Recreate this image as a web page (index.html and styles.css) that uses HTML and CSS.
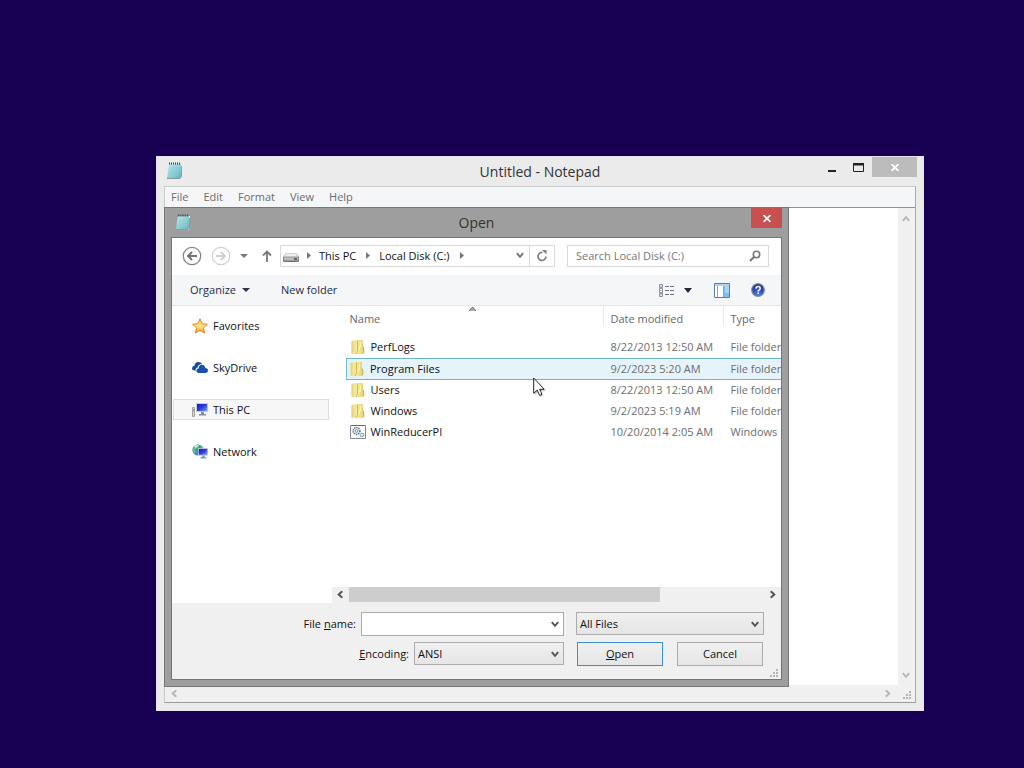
FILE: index.html
```html
<!DOCTYPE html>
<html lang="en">
<head>
<meta charset="utf-8">
<title>Untitled - Notepad</title>
<link rel="stylesheet" href="styles.css">
</head>
<body>
<svg width="0" height="0" class="defs" aria-hidden="true">
  <defs>
    <linearGradient id="gFolder" x1="0" x2="1"><stop offset="0" stop-color="#f8efa6"/><stop offset="1" stop-color="#e6cf62"/></linearGradient>
    <linearGradient id="gPad" x1="0" y1="0" x2="1" y2="1"><stop offset="0" stop-color="#c4eaee"/><stop offset="1" stop-color="#5fb4bd"/></linearGradient>
    <linearGradient id="gScreen" x1="0" x2="1" y2="1"><stop offset="0" stop-color="#1a22a8"/><stop offset=".5" stop-color="#2a3be0"/><stop offset="1" stop-color="#7aa2f4"/></linearGradient>
    <linearGradient id="gStar" x1="0" y1="0" x2="0" y2="1"><stop offset="0" stop-color="#ffc23c"/><stop offset=".5" stop-color="#ffe680"/><stop offset="1" stop-color="#f59a2c"/></linearGradient>
    <radialGradient id="gHelp" cx=".5" cy=".8" r=".7"><stop offset="0" stop-color="#4c7bea"/><stop offset="1" stop-color="#1c2c90"/></radialGradient>
    <linearGradient id="gDisk" x1="0" y1="0" x2="0" y2="1"><stop offset="0" stop-color="#b5b5b5"/><stop offset="1" stop-color="#6d6d6d"/></linearGradient>
    <symbol id="pad" viewBox="0 0 16 17">
      <path d="M4 2h12l-1 15H2z" fill="#fff"/>
      <path d="M3 2h12v13l-1 1.500H1z" fill="url(#gPad)"/>
      <path d="M1 16.500h13l1.500-2V4" fill="none" stroke="#74888b" stroke-width=".8"/>
      <path d="M4 6h9M3.700 8.500h9M3.400 11h9M3 13.500h9" stroke="#8fcfd6" stroke-width=".7"/>
      <path d="M3 1.500h12" stroke="#35494c" stroke-width="2" stroke-dasharray="1 1"/>
    </symbol>
    <symbol id="folder" viewBox="0 0 16 16">
      <path d="M1.500 2 4 1.500 8 1v14l-6.500-.500z" fill="#f3e795"/>
      <path d="M1.500 2 3.500 1.600v13.100l-2-.200z" fill="#e6d582"/>
      <path d="M7 1h5q1 0 1 1v5l1 2v4.500q0 1.500-1.500 1.500H6.500z" fill="url(#gFolder)"/>
      <path d="M7.500 1.500v10l-1.500 3.500" fill="none" stroke="#c9ab45" stroke-width=".8"/>
      <path d="M10.500 3v4.500l-1.500 3" fill="none" stroke="#fbf5c0" stroke-width="1.200"/>
      <path d="M12.800 7.500 13.800 9v5" fill="none" stroke="#b8a55e" stroke-width=".8"/>
    </symbol>
    <symbol id="chev" viewBox="0 0 8 7"><path d="M.8 1.200 4 4.800l3.200-3.600" fill="none" stroke="currentColor" stroke-width="2"/></symbol>
    <symbol id="grip" viewBox="0 0 9 9"><path d="M6 0h2v2H6zM3 3h2v2H3zM6 3h2v2H6zM0 6h2v2H0zM3 6h2v2H3zM6 6h2v2H6z" fill="#b5b5b5"/></symbol>
    <symbol id="monitor" viewBox="0 0 12 13">
      <path d="M0 0h12v9H0z" fill="#c3cbe0"/><path d="M1 1h10v7H1z" fill="url(#gScreen)"/>
      <path d="M5 9h3v2H5zM3 11h7v1.500H3z" fill="#7d92a8"/>
    </symbol>
  </defs>
</svg>

<main class="desktop">
<section class="notepad" aria-label="Notepad">
  <header class="titlebar">
    <svg class="pad-icon" width="16" height="17"><use href="#pad"/></svg>
    <h1>Untitled - Notepad</h1>
    <div class="controls">
      <button class="min" aria-label="Minimize"><svg width="8" height="10"><path d="M0 8h8v2H0z" fill="#222"/></svg></button>
      <button class="max" aria-label="Maximize"><svg width="11" height="9"><path d="M.5 2v6.500h10V2" fill="none" stroke="#222"/><path d="M0 0h11v2.500H0z" fill="#222"/></svg></button>
      <button class="close" aria-label="Close"><svg width="8" height="7"><path d="M.5 0 7.500 7M7.500 0 .5 7" stroke="#fff" stroke-width="1.800"/></svg></button>
    </div>
  </header>
  <div class="client">
    <nav class="menu">
      <button>File</button><button>Edit</button><button>Format</button><button>View</button><button>Help</button>
    </nav>
    <div class="editor">
      <textarea aria-label="Document text"></textarea>
      <div class="vscroll">
        <svg class="up" width="8" height="7"><use href="#chev"/></svg>
        <svg width="8" height="7"><use href="#chev"/></svg>
      </div>
    </div>
    <div class="hscroll">
      <svg class="left" width="8" height="7"><use href="#chev"/></svg>
      <svg class="right" width="8" height="7"><use href="#chev"/></svg>
      <svg class="grip" width="9" height="9"><use href="#grip"/></svg>
    </div>
  </div>

  <section class="dialog" role="dialog" aria-label="Open">
    <header class="dialog-title">
      <svg class="pad-icon" width="15" height="16"><use href="#pad"/></svg>
      <h2>Open</h2>
      <button class="dialog-close" aria-label="Close"><svg width="8" height="7"><path d="M.5 0 7.500 7M7.500 0 .5 7" stroke="#fff" stroke-width="1.800"/></svg></button>
    </header>
    <div class="dialog-body">
      <div class="navbar">
        <button class="round" aria-label="Back"><svg width="20" height="20"><circle cx="10" cy="10" r="8.700" fill="none" stroke="#858585" stroke-width="1.300"/><path d="M15 10H7M10 6l-4 4 4 4" fill="none" stroke="#757575" stroke-width="2"/></svg></button>
        <button class="round" aria-label="Forward"><svg width="20" height="20"><circle cx="10" cy="10" r="8.700" fill="none" stroke="#cfcfcf" stroke-width="1.200"/><path d="M5 10h8M10 6l4 4-4 4" fill="none" stroke="#cfcfcf" stroke-width="1.800"/></svg></button>
        <button class="recent" aria-label="Recent locations"><svg width="8" height="4"><path d="M0 0h8L4 4z" fill="#777"/></svg></button>
        <button class="parent" aria-label="Up one level"><svg width="10" height="12"><path d="M5 12V2M1 5.500 5 1.500l4 4" fill="none" stroke="#777" stroke-width="1.800"/></svg></button>
        <div class="address">
          <svg width="16" height="9"><path d="M3 0h10l3 3.500v4q0 1.500-1.500 1.500h-13Q0 9 0 7.500v-4z" fill="url(#gDisk)"/><path d="M3.300.5h9.400l2.500 3H.8z" fill="#ededed"/><path d="M1 4.500h14v3H1z" fill="#bdbdbd"/><path d="M11 5h3v2h-3z" fill="#5e6b5e"/></svg>
          <svg class="arrow" width="4" height="7"><path d="M0 0v7l4-3.500z" fill="#777"/></svg>
          <button>This PC</button>
          <svg class="arrow" width="4" height="7"><path d="M0 0v7l4-3.500z" fill="#777"/></svg>
          <button>Local Disk (C:)</button>
          <svg class="arrow" width="4" height="7"><path d="M0 0v7l4-3.500z" fill="#777"/></svg>
          <button class="history" aria-label="Previous locations"><svg width="8" height="7"><use href="#chev"/></svg></button>
          <button class="refresh" aria-label="Refresh"><svg width="12" height="12"><path d="M6.500 2.500A4 4 0 1 0 10 6.500" fill="none" stroke="#808080" stroke-width="1.700"/><path d="M6 0h4.500v4.500z" fill="#808080"/></svg></button>
        </div>
        <div class="search">
          <input type="search" placeholder="Search Local Disk (C:)" aria-label="Search Local Disk (C:)">
          <svg width="12" height="12"><circle cx="7.500" cy="4.500" r="3.200" fill="none" stroke="#777" stroke-width="1.600"/><path d="M5 7 1 11" stroke="#777" stroke-width="2.200"/></svg>
        </div>
      </div>

      <div class="toolbar">
        <button class="organize">Organize <svg width="8" height="4"><path d="M0 0h8L4 4z" fill="#2c3648"/></svg></button>
        <button>New folder</button>
        <div class="tools">
          <button aria-label="Change view"><svg width="15" height="13"><path d="M.5.5h3v3h-3zM.5 4.500h3v4h-3zM.5 9.500h3v3h-3z" fill="#fff" stroke="#8b919b"/><path d="M1.500 2h1M1.500 6.500h1M1.500 11h1M6 2.500h4M11 2.500h4M6 6.500h4M11 6.500h4M6 10.500h4M11 10.500h4" stroke="#6d7380"/></svg></button>
          <button class="view-more" aria-label="More options"><svg width="8" height="5"><path d="M0 0h8L4 5z" fill="#1f2838"/></svg></button>
          <button class="preview" aria-label="Preview pane"><svg width="16" height="15"><path d="M.5.5h15v14H.5z" fill="#fff" stroke="#5580ad"/><path d="M1 1h14v2H1z" fill="#b9d2ea"/><path d="M10 3h5v11h-5z" fill="#82bbf0"/><path d="M11 3h4v7h-4z" fill="#a9d2f8"/><path d="M3.500 3v11M9.500 3v11" stroke="#8ba5c1"/></svg></button>
          <button aria-label="Help"><svg width="14" height="14"><circle cx="7" cy="7" r="6.300" fill="url(#gHelp)" stroke="#7d8cae" stroke-width="1.200"/><path d="M4.900 5.600Q5 3.500 7.200 3.500q2 0 2 1.800 0 1.100-1.100 1.700-.9.500-.9 1.500M7.200 9.500v1.600" fill="none" stroke="#fff" stroke-width="1.500"/></svg></button>
        </div>
      </div>

      <div class="panes">
        <nav class="sidebar">
          <a href="#favorites"><svg width="16" height="16"><path d="m8 .8 2.200 4.900 5.200.6-3.900 3.500 1.100 5.200L8 12.400 3.400 15l1.100-5.200L.6 6.300l5.200-.6z" fill="url(#gStar)" stroke="#df8432"/></svg>Favorites</a>
          <a href="#skydrive"><svg width="16" height="16"><path d="M3 10.500Q0 10.500 0 8.300 0 6 2.300 6 2.800 2 6.500 2 9 2 10.200 4 6 4 5.700 7.500 3.300 7.500 3.700 10.500z" fill="#174c9c"/><path d="M6.500 13Q4.300 12.800 4.300 10.800 4.500 8.700 6.600 8.600 6.800 4.900 10 4.800q2.600 0 3.300 3.200Q16 8.100 16 10.500T13.600 13z" fill="#1554ad"/></svg>SkyDrive</a>
          <a href="#this-pc" class="current"><svg width="16" height="16"><use href="#monitor" x="4" y="1" width="12" height="13"/><path d="M.5 5.500h2v9h-2z" fill="#cfd5c4" stroke="#a4a89b"/><path d="M1 7h1v2H1z" fill="#8ca37b"/></svg>This PC</a>
          <a href="#network"><svg width="16" height="16"><circle cx="6" cy="6" r="5.600" fill="#3a91c9"/><path d="M1 4Q3 0 7 .6 6 2 7 3L5 5 3 5.500 4 8 2.500 9.500Q0 7 1 4zM8 1l3 3-2 1.500z" fill="#68bd78"/><path d="M2 2.500Q5 0 7 1L4 4z" fill="#d3f0e3"/><use href="#monitor" x="6" y="4" width="10" height="11"/></svg>Network</a>
        </nav>
        <div class="files">
          <div class="table-clip">
            <svg class="sort" width="7" height="4"><path d="M0 4h7L3.500 0z" fill="#aaa"/><path d="M0 4 3.500 0 7 4" fill="none" stroke="#666"/></svg>
            <table>
              <colgroup><col class="c-name"><col class="c-date"><col class="c-type"></colgroup>
              <thead><tr><th>Name</th><th>Date modified</th><th>Type</th></tr></thead>
              <tbody>
                <tr><td><span><svg width="16" height="16"><use href="#folder"/></svg>PerfLogs</span></td><td>8/22/2013 12:50 AM</td><td>File folder</td></tr>
                <tr class="hover"><td><span><svg width="16" height="16"><use href="#folder"/></svg>Program Files</span></td><td>9/2/2023 5:20 AM</td><td>File folder</td></tr>
                <tr><td><span><svg width="16" height="16"><use href="#folder"/></svg>Users</span></td><td>8/22/2013 12:50 AM</td><td>File folder</td></tr>
                <tr><td><span><svg width="16" height="16"><use href="#folder"/></svg>Windows</span></td><td>9/2/2023 5:19 AM</td><td>File folder</td></tr>
                <tr><td><span><svg width="16" height="16"><path d="M.5 1.500h15v13H.5z" fill="#fff" stroke="#7d8898"/><path d="M1 1.500h14" stroke="#5f6f86"/><circle cx="6.500" cy="7" r="3.400" fill="#e4edf5" stroke="#5c7389" stroke-width="1.500" stroke-dasharray="1.300 .9"/><circle cx="6.500" cy="7" r="1.300" fill="#fff" stroke="#5c7389" stroke-width=".7"/><circle cx="12" cy="11" r="1.800" fill="#e4edf5" stroke="#5c7389" stroke-width="1.100" stroke-dasharray="1 .6"/></svg>WinReducerPI</span></td><td>10/20/2014 2:05 AM</td><td>Windows</td></tr>
              </tbody>
            </table>
          </div>
          <div class="files-scroll">
            <svg class="left" width="8" height="7"><use href="#chev"/></svg>
            <div class="track"><div class="thumb"></div></div>
            <svg class="right" width="8" height="7"><use href="#chev"/></svg>
          </div>
        </div>
      </div>

      <form class="footer">
        <label for="fname">File <u>n</u>ame:</label>
        <div class="field"><input id="fname" type="text"><svg width="8" height="7"><use href="#chev"/></svg></div>
        <div class="field type"><select aria-label="File type"><option>All Files</option></select><svg width="8" height="7"><use href="#chev"/></svg></div>
        <div class="encoding">
          <label for="enc"><u>E</u>ncoding:</label>
          <div class="field"><select id="enc"><option>ANSI</option></select><svg width="8" height="7"><use href="#chev"/></svg></div>
        </div>
        <div class="actions">
          <button type="button" class="default"><span><u>O</u>pen</span></button>
          <button type="button">Cancel</button>
        </div>
        <svg class="grip" width="9" height="9"><use href="#grip"/></svg>
      </form>
    </div>
  </section>
</section>
<svg class="cursor" width="13" height="20"><path d="M1.500 2.500v16l3.500-3.300 2.500 5L10 19l-2.300-4.700h4.600z" fill="#000" opacity=".2"/><path d="M.7 1v15.300l3.500-3.200 2.400 5.300 2.400-1.100-2.300-5h4.600z" fill="#fff" stroke="#222"/></svg>
</main>
</body>
</html>
```
FILE: styles.css
```css
* { box-sizing: border-box; }
body {
  margin: 0;
  font: 11px/16px "Open Sans", "Noto Sans", sans-serif;
  color: #111;
}
button, input, select, textarea { font: inherit; color: inherit; margin: 0; }
button { border: 0; background: none; padding: 0; }
svg { display: block; flex: none; }
h1, h2 { margin: 0; font-weight: 400; font-size: 14px; line-height: 20px; color: #333; text-align: center; }
.defs { position: absolute; }
.left { transform: rotate(90deg); }
.right { transform: rotate(-90deg); }
.up { transform: rotate(180deg); }

.desktop { position: relative; height: 100vh; background: #180052; overflow: hidden; }
.notepad {
  position: absolute; left: 156px; top: 156px; right: 100px; bottom: 57px;
  display: flex; flex-direction: column;
  padding: 0 7px 7px; background: #ebebeb; border: 1px solid #e9e3ee;
}
.titlebar { display: grid; grid-template-columns: 1fr auto 1fr; height: 29px; flex: none; }
.titlebar .pad-icon { margin: 5px 2px; }
.titlebar h1 { padding-top: 5px; }
.controls { display: flex; justify-content: flex-end; align-items: flex-start; margin-right: -1px; }
.controls button { display: grid; place-items: center; height: 20px; width: 27px; }
.controls .min { padding-bottom: 1px; }
.controls .close { width: 45px; background: #bcbcbc; }

.client { flex: 1; display: flex; flex-direction: column; border: 1px solid #c9cccc; border-bottom-color: #9a9a9a; border-right-color: #a9a9a9; min-height: 0; }
.menu { display: flex; gap: 15px; height: 20px; padding-left: 6px; background: #f5f6f7; color: #6d6d6d; flex: none; }
.editor { flex: 1; display: flex; border-top: 1px solid #8e9494; min-height: 0; }
.editor textarea { flex: 1; border: 0; resize: none; background: #fff; outline: 0; }
.vscroll { width: 17px; background: #f0f0f0; display: flex; flex-direction: column; align-items: center; justify-content: space-between; padding: 7px 2px 6px 0; color: #b8b8b8; }
.hscroll { height: 17px; background: #f0f0f0; display: flex; align-items: center; padding: 0 3px 1px 5px; color: #b8b8b8; flex: none; }
.hscroll .right { margin-left: auto; margin-right: 11px; }
.hscroll .grip { align-self: flex-end; margin-bottom: 1px; }

.dialog {
  position: absolute; left: 7px; top: 50px; right: 134px; bottom: 23px;
  display: flex; flex-direction: column;
  padding: 0 6px 6px; background: #9e9e9e; border: 1px solid #777;
}
.dialog-title { display: grid; grid-template-columns: 1fr auto 1fr; height: 29px; flex: none; }
.dialog-title .pad-icon { margin: 6px 4px; }
.dialog-title h2 { padding-top: 5px; }
.dialog-close { justify-self: end; width: 31px; height: 20px; background: #c75050; display: grid; place-items: center; }

.dialog-body { flex: 1; display: flex; flex-direction: column; min-height: 0; background: #fff; border: 1px solid #757575; }
.navbar { display: flex; align-items: center; height: 37px; padding: 0 12px 2px 10px; flex: none; }
.round + .round { margin-left: 9px; }
.recent { margin-left: 9px; }
.parent { margin: 0 8px 0 14px; }
.address, .search { display: flex; align-items: center; height: 22px; border: 1px solid #d9d9d9; }
.address { flex: 1; padding-left: 2px; }
.address > svg:first-child { margin-top: 4px; }
.address .arrow { margin: 0 8px; }
.address button + .arrow { margin: 0 9px 0 10px; }
.address .history { margin-left: auto; color: #777; padding: 0 5px; }
.refresh { border-left: 1px solid #d9d9d9; width: 25px; height: 20px; display: grid; place-items: center; }
.search { width: 202px; margin-left: 12px; padding: 0 7px 0 8px; }
.search input { flex: 1; min-width: 0; border: 0; padding: 0; outline: 0; background: none; }
.search input::placeholder { color: #757575; }

.toolbar { display: flex; align-items: center; gap: 31px; height: 31px; padding: 0 16px 0 18px; background: #f5f6f7; border-bottom: 1px solid #e3e5e8; color: #1e2b47; flex: none; }
.organize { display: flex; align-items: center; gap: 6px; }
.tools { margin-left: auto; display: flex; align-items: center; }
.view-more { margin: 0 22px 0 10px; }
.preview { margin-right: 21px; }

.panes { flex: 1; display: flex; min-height: 0; }
.sidebar { width: 160px; padding: 9px 3px 0 1px; display: flex; flex-direction: column; gap: 21px; flex: none; }
.sidebar a { display: flex; align-items: center; gap: 5px; height: 21px; padding-left: 18px; border: 1px solid transparent; color: #111; text-decoration: none; }
.sidebar .current { background: #f7f7f7; border-color: #dedede; }
.files { flex: 1; min-width: 0; display: flex; flex-direction: column; }
.table-clip { position: relative; flex: 1; min-height: 0; overflow: hidden; padding-left: 14px; }
.sort { position: absolute; left: 137px; top: 1px; }
table { border-collapse: collapse; table-layout: fixed; width: 520px; color: #6d6d6d; }
.c-name { width: 257px; }
.c-date { width: 120px; }
th { text-align: left; font-weight: 400; height: 31px; padding: 0 0 5px 7px; background: linear-gradient(#e8e8e8, #e8e8e8) right top / 1px 20px no-repeat; color: #666; }
th:first-child { padding-left: 3px; }
td { height: 21px; padding: 0 0 0 7px; white-space: nowrap; }
td:first-child { padding-left: 3px; color: #111; }
td span { display: flex; align-items: center; gap: 5px; }
.hover td { background: #e5f3fb; border-top: 1px solid #70b4cc; border-bottom: 1px solid #70b4cc; }
.hover td:first-child { border-left: 1px solid #70c0e7; padding-left: 2px; }
.files-scroll { height: 16px; background: #f0f0f0; display: flex; align-items: flex-start; padding: 0 4px; color: #555; flex: none; }
.files-scroll svg { margin-top: 4px; }
.track { flex: 1; height: 15px; margin: 0 5px; }
.thumb { width: 75%; height: 100%; background: #cdcdcd; }

.footer {
  position: relative; flex: none; background: #f0f0f0;
  display: grid; grid-template-columns: 1fr 203px 195px; column-gap: 5px; row-gap: 6px;
  align-items: start; padding: 9px 17px 13px;
}
.footer label { justify-self: end; line-height: 24px; }
.footer .type, .actions { margin-left: 7px; }
.field { position: relative; }
.field svg { position: absolute; right: 5px; top: 9px; color: #555; pointer-events: none; }
.field input, .field select { display: block; width: 100%; height: 23px; border: 1px solid #acacac; border-radius: 0; outline: 0; padding: 0 3px; appearance: none; }
.field select { background: linear-gradient(#f0f0f0, #e5e5e5); }
.field input { height: 24px; background: #fff; }
.encoding { grid-column: 1 / 3; display: flex; justify-content: flex-end; gap: 5px; }
.encoding .field { width: 150px; }
.actions { display: flex; justify-content: space-between; padding: 0 1px; }
.actions button { width: 86px; height: 24px; border: 1px solid #acacac; background: linear-gradient(#f0f0f0, #e5e5e5); }
.actions .default { border-color: #3c8fd0; }
.footer .grip { position: absolute; right: 2px; bottom: 1px; }

.cursor { position: absolute; left: 533px; top: 377px; }
```
